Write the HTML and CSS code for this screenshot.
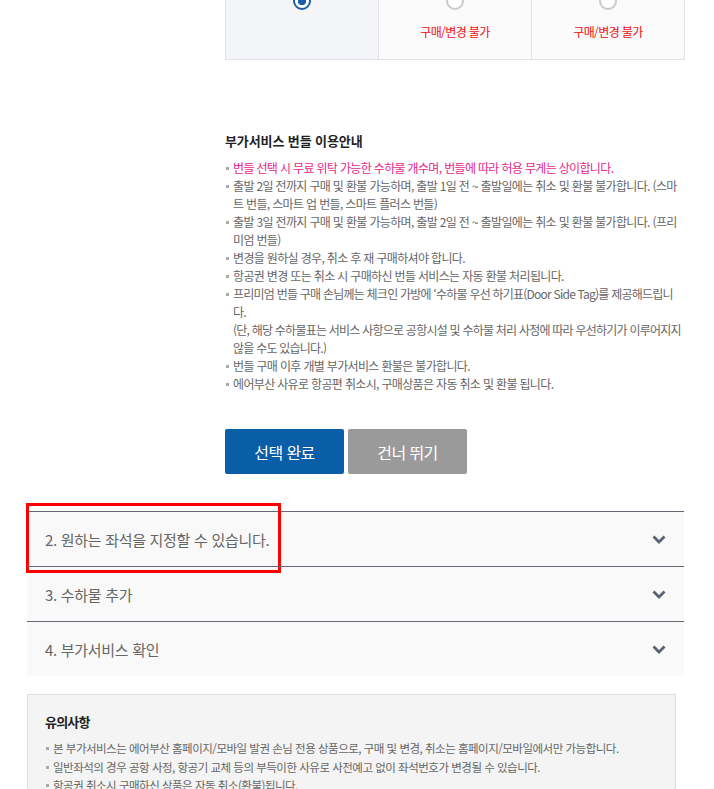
FILE: index.html
```html
<!DOCTYPE html>
<html lang="ko">
<head>
    <meta charset="UTF-8">
    <title>부가서비스 번들</title>
    <link rel="stylesheet" href="styles.css">
</head>
<body>
    <div class="page">
        <section class="step-open">
            <div class="step-body">
                <div class="fare-grid">
                    <div class="fare-cell selected">
                        <span class="radio checked"></span>
                    </div>
                    <div class="fare-cell">
                        <span class="radio"></span>
                        <p class="fare-off">구매/변경 불가</p>
                    </div>
                    <div class="fare-cell">
                        <span class="radio"></span>
                        <p class="fare-off">구매/변경 불가</p>
                    </div>
                </div>

                <div class="bundle-guide">
                    <h3>부가서비스 번들 이용안내</h3>
                    <ul class="dot-list">
                        <li class="point">번들 선택 시 무료 위탁 가능한 수하물 개수며, 번들에 따라 허용 무게는 상이합니다.</li>
                        <li>출발 2일 전까지 구매 및 환불 가능하며, 출발 1일 전 ~ 출발일에는 취소 및 환불 불가합니다. (스마트 번들, 스마트 업 번들, 스마트 플러스 번들)</li>
                        <li>출발 3일 전까지 구매 및 환불 가능하며, 출발 2일 전 ~ 출발일에는 취소 및 환불 불가합니다. (프리미엄 번들)</li>
                        <li>변경을 원하실 경우, 취소 후 재 구매하셔야 합니다.</li>
                        <li>항공권 변경 또는 취소 시 구매하신 번들 서비스는 자동 환불 처리됩니다.</li>
                        <li class="tight">프리미엄 번들 구매 손님께는 체크인 가방에 ‘수하물 우선 하기표(Door Side Tag)를 제공해드립니다.<br>(단, 해당 수하물표는 서비스 사항으로 공항시설 및 수하물 처리 사정에 따라 우선하기가 이루어지지 않을 수도 있습니다.)</li>
                        <li>번들 구매 이후 개별 부가서비스 환불은 불가합니다.</li>
                        <li>에어부산 사유로 항공편 취소시, 구매상품은 자동 취소 및 환불 됩니다.</li>
                    </ul>
                </div>

                <div class="btn-area">
                    <button type="button" class="btn btn-blue">선택 완료</button>
                    <button type="button" class="btn btn-grey">건너 뛰기</button>
                </div>
            </div>
        </section>

        <div class="accordion">
            <div class="acc-item">
                <span class="acc-title">2. 원하는 좌석을 지정할 수 있습니다.</span>
                <svg class="chevron" width="14" height="9" viewBox="0 0 14 9"><polyline points="1.5,1.5 7,7 12.5,1.5" /></svg>
                <span class="mark-box"></span>
            </div>
            <div class="acc-item">
                <span class="acc-title">3. 수하물 추가</span>
                <svg class="chevron" width="14" height="9" viewBox="0 0 14 9"><polyline points="1.5,1.5 7,7 12.5,1.5" /></svg>
            </div>
            <div class="acc-item">
                <span class="acc-title">4. 부가서비스 확인</span>
                <svg class="chevron" width="14" height="9" viewBox="0 0 14 9"><polyline points="1.5,1.5 7,7 12.5,1.5" /></svg>
            </div>
        </div>

        <div class="notice-box">
            <h4>유의사항</h4>
            <ul class="dot-list small">
                <li>본 부가서비스는 에어부산 홈페이지/모바일 발권 손님 전용 상품으로, 구매 및 변경, 취소는 홈페이지/모바일에서만 가능합니다.</li>
                <li>일반좌석의 경우 공항 사정, 항공기 교체 등의 부득이한 사유로 사전예고 없이 좌석번호가 변경될 수 있습니다.</li>
                <li>항공권 취소시 구매하신 상품은 자동 취소(환불)됩니다.</li>
            </ul>
        </div>
    </div>
</body>
</html>
```

FILE: styles.css
```css
body {
    margin: 0;
    background-color: #fff;
    font-family: "Noto Sans CJK KR", "Noto Sans", sans-serif;
    color: #555;
    overflow: hidden;
}

ul, p, h3, h4 {
    margin: 0;
    padding: 0;
}

.page {
    width: 657px;
    margin: -50px 0 0 27px;
}

.step-body {
    padding-left: 198px;
}

/* fare table */
.fare-grid {
    display: grid;
    grid-template-columns: 152px 153px 153px;
    border: 1px solid #e2e3e6;
    width: 458px;
}

.fare-cell {
    display: flex;
    flex-direction: column;
    align-items: center;
    padding: 41px 0 18px;
    background-color: #fbfbfc;
    border-left: 1px solid #e2e3e6;
}

.fare-cell:first-child {
    border-left: none;
}

.fare-cell.selected {
    background-color: #f3f5f9;
}

.radio {
    display: block;
    width: 18px;
    height: 18px;
    box-sizing: border-box;
    border: 2px solid #c9cacd;
    border-radius: 50%;
    background-color: #fff;
}

.radio.checked {
    border-color: #1c5ea6;
    background: radial-gradient(circle, #1c5ea6 0, #1c5ea6 4px, #fff 4.5px);
}

.fare-off {
    margin-top: 13px;
    font-size: 12px;
    line-height: 18px;
    letter-spacing: -0.6px;
    color: #f20d0d;
}

/* bundle guide */
.bundle-guide {
    margin-top: 72px;
    width: 459px;
}

.bundle-guide h3 {
    font-size: 13px;
    line-height: 18px;
    font-weight: bold;
    color: #222;
    letter-spacing: -0.1px;
    margin-bottom: 9px;
}

.dot-list {
    list-style: none;
}

.dot-list li {
    padding-left: 8px;
    font-size: 12px;
    line-height: 18px;
    letter-spacing: -0.66px;
    color: #666;
    background: linear-gradient(#a9a9a9, #a9a9a9) no-repeat 1px 8px / 3px 3px;
}

.dot-list li.tight {
    letter-spacing: -0.77px;
}

.dot-list li.point {
    color: #e5278c;
}

.btn-area {
    display: flex;
    gap: 4px;
    margin-top: 36px;
}

.btn {
    width: 119px;
    height: 45px;
    border: none;
    border-radius: 2px;
    color: #fff;
    font-family: inherit;
    font-size: 16px;
    letter-spacing: -0.6px;
    cursor: pointer;
}

.btn-blue {
    background-color: #0a5ea8;
}

.btn-grey {
    background-color: #9a9a9a;
}

/* accordion */
.accordion {
    margin-top: 37px;
    background-color: #f9f9f9;
}

.acc-item {
    position: relative;
    display: flex;
    align-items: center;
    justify-content: space-between;
    height: 54px;
    padding: 0 18px;
    border-top: 1px solid #626874;
}

.acc-title {
    font-size: 15px;
    letter-spacing: -0.3px;
    color: #666;
}

.chevron polyline {
    fill: none;
    stroke: #5b6170;
    stroke-width: 2.8;
}

/* red annotation box */
.mark-box {
    position: absolute;
    left: -1px;
    top: -9px;
    width: 255px;
    height: 70px;
    box-sizing: border-box;
    border: 3px solid #ff0000;
}

/* notice */
.notice-box {
    width: 649px;
    box-sizing: border-box;
    margin-top: 18px;
    padding: 18px 17px 20px;
    border: 1px solid #dedede;
    background-color: #f4f4f4;
}

.notice-box h4 {
    font-size: 13px;
    line-height: 18px;
    letter-spacing: -0.8px;
    color: #222;
    margin-bottom: 8px;
}

.dot-list.small li {
    font-size: 11.5px;
    line-height: 18.5px;
    letter-spacing: -0.5px;
    padding-left: 8px;
}
```
